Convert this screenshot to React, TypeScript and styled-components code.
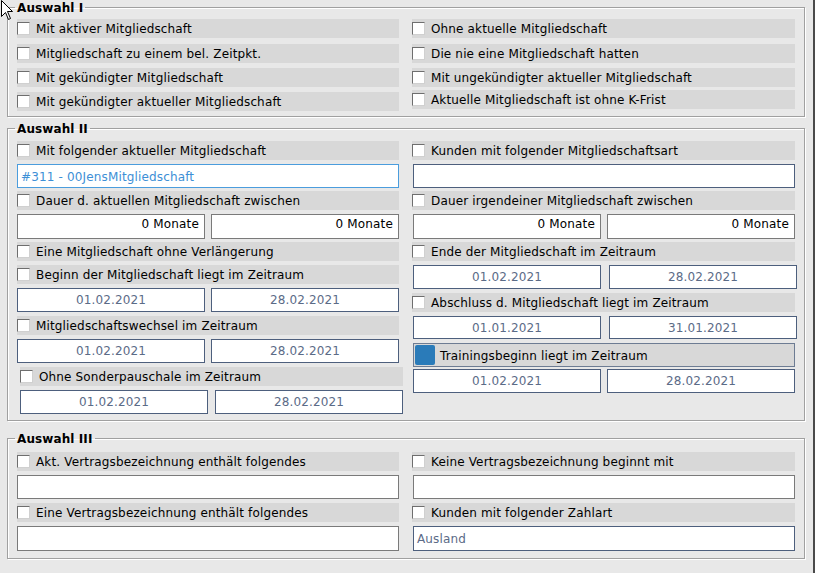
import React from 'react';
import styled, { createGlobalStyle } from 'styled-components';

const Global = createGlobalStyle`
  html, body { margin: 0; padding: 0; background: #e8e8e8; }
  body { font-family: "DejaVu Sans", Verdana, sans-serif; font-size: 12px; color: #000; letter-spacing: 0.15px; }
  * { box-sizing: border-box; }
`;

const Page = styled.div`
  position: relative;
  width: 815px;
  height: 573px;
  background: #e8e8e8;
  border-right: 2px solid #4a4a4a;
  overflow: hidden;
`;

const Group = styled.fieldset<{ $mt: number; $pt: number; $pb: number }>`
  margin: ${p => p.$mt}px 0 0 7px;
  width: 798px;
  min-width: 0;
  border: 1px solid #a0a0a0;
  box-shadow: 1px 1px 0 #fff, inset 1px 1px 0 #fff;
  padding: ${p => p.$pt}px 9px ${p => p.$pb}px 9px;
  display: grid;
  grid-template-columns: 382px 383px;
  column-gap: 13px;
  align-items: start;
`;

const Legend = styled.legend`
  font-weight: bold;
  font-size: 12px;
  line-height: 14px;
  padding: 1px 2px 0;
  margin-left: -2px;
  letter-spacing: 0.1px;
`;

const Column = styled.div`
  display: flex;
  flex-direction: column;
  min-width: 0;
`;

const CheckRow = styled.div<{ $mt?: number; $ml?: number; $mr?: number }>`
  height: 19px;
  margin: ${p => p.$mt ?? 0}px ${p => p.$mr ?? 0}px 0 ${p => p.$ml ?? 0}px;
  background: #d8d8d8;
  display: flex;
  align-items: center;
  gap: 6px;
  white-space: nowrap;
  line-height: 19px;
`;

const Label = styled.span`
  padding-top: 1px;
`;

const Box = styled.span`
  width: 13px;
  height: 13px;
  flex: none;
  background: #fff;
  border-top: 1px solid #6e6e6e;
  border-left: 1px solid #6e6e6e;
  border-right: 1px solid #d0d0d0;
  border-bottom: 1px solid #d0d0d0;
`;

const ActiveRow = styled.div<{ $mt?: number; $ml?: number }>`
  height: 24px;
  margin: ${p => p.$mt ?? 0}px 0 0 ${p => p.$ml ?? 0}px;
  background: #d8d8d8;
  border: 1px solid #6d7c93;
  display: flex;
  align-items: center;
  gap: 5px;
  padding-left: 1px;
  white-space: nowrap;
`;

const BlueBox = styled.span`
  width: 20px;
  height: 20px;
  flex: none;
  background: #2a7bb9;
  border-radius: 2px;
`;

const borderTones: Record<string, string> = {
  focus: '#4b9ddd',
  slate: '#4d5f7d',
  grey: '#7a7a7a',
};

const TextField = styled.div<{ $tone: string; $mt?: number; $ml?: number; $h?: number }>`
  height: ${p => p.$h ?? 24}px;
  margin: ${p => p.$mt ?? 0}px 0 0 ${p => p.$ml ?? 0}px;
  background: #fff;
  border: 1px solid ${p => borderTones[p.$tone]};
  display: flex;
  align-items: center;
  padding: 1px 0 0 3px;
  color: ${p => (p.$tone === 'focus' ? '#3d8fd6' : '#5b6b87')};
  white-space: nowrap;
`;

const Pair = styled.div<{ $mt?: number; $ml?: number; $mr?: number; $gap?: number; $h?: number }>`
  display: grid;
  grid-template-columns: 1fr 1fr;
  column-gap: ${p => p.$gap ?? 6}px;
  height: ${p => p.$h ?? 24}px;
  margin: ${p => p.$mt ?? 0}px ${p => p.$mr ?? 0}px 0 ${p => p.$ml ?? 0}px;
`;

const DateField = styled.div`
  background: #fff;
  border: 1px solid #4d5f7d;
  color: #5b6b87;
  display: flex;
  align-items: center;
  justify-content: center;
`;

const MonthField = styled.div`
  background: #fff;
  border: 1px solid #7a7a7a;
  color: #000;
  text-align: right;
  padding: 2px 5px 0 0;
  line-height: 15px;
`;

const Cursor = styled.svg`
  position: absolute;
  left: 0;
  top: 0;
`;

type RowProps = { label: string; mt?: number; ml?: number; mr?: number };
const Check = ({ label, mt, ml, mr }: RowProps) => (
  <CheckRow $mt={mt} $ml={ml} $mr={mr}>
    <Box />
    <Label>{label}</Label>
  </CheckRow>
);

type PairProps = { a: string; b: string; mt?: number; ml?: number; mr?: number; gap?: number; h?: number };
const Dates = ({ a, b, mt, ml, mr, gap, h }: PairProps) => (
  <Pair $mt={mt} $ml={ml} $mr={mr} $gap={gap} $h={h}>
    <DateField>{a}</DateField>
    <DateField>{b}</DateField>
  </Pair>
);

const Months = ({ mt, ml }: { mt?: number; ml?: number }) => (
  <Pair $mt={mt} $ml={ml} $h={25}>
    <MonthField>0 Monate</MonthField>
    <MonthField>0 Monate</MonthField>
  </Pair>
);

export default function App() {
  return (
    <Page>
      <Global />
      <Group $mt={0} $pt={4} $pb={5}>
        <Legend>Auswahl I</Legend>
        <Column>
          <Check label="Mit aktiver Mitgliedschaft" />
          <Check label="Mitgliedschaft zu einem bel. Zeitpkt." mt={6} />
          <Check label="Mit gekündigter Mitgliedschaft" mt={5} />
          <Check label="Mit gekündigter aktueller Mitgliedschaft" mt={5} />
        </Column>
        <Column>
          <Check label="Ohne aktuelle Mitgliedschaft" />
          <Check label="Die nie eine Mitgliedschaft hatten" mt={6} />
          <Check label="Mit ungekündigter aktueller Mitgliedschaft" mt={5} />
          <Check label="Aktuelle Mitgliedschaft ist ohne K-Frist" mt={3} />
        </Column>
      </Group>

      <Group $mt={4} $pt={5} $pb={6}>
        <Legend>Auswahl II</Legend>
        <Column>
          <Check label="Mit folgender aktueller Mitgliedschaft" />
          <TextField $tone="focus" $mt={4}>#311 - 00JensMitgliedschaft</TextField>
          <Check label="Dauer d. aktuellen Mitgliedschaft zwischen" mt={3} />
          <Months mt={4} />
          <Check label="Eine Mitgliedschaft ohne Verlängerung" mt={3} />
          <Check label="Beginn der Mitgliedschaft liegt im Zeitraum" mt={4} />
          <Dates a="01.02.2021" b="28.02.2021" mt={4} />
          <Check label="Mitgliedschaftswechsel im Zeitraum" mt={4} />
          <Dates a="01.02.2021" b="28.02.2021" mt={4} />
          <Check label="Ohne Sonderpauschale im Zeitraum" mt={4} ml={3} mr={-4} />
          <Dates a="01.02.2021" b="28.02.2021" mt={4} ml={3} mr={-4} gap={7} />
        </Column>
        <Column>
          <Check label="Kunden mit folgender Mitgliedschaftsart" />
          <TextField $tone="slate" $mt={4} $ml={1} />
          <Check label="Dauer irgendeiner Mitgliedschaft zwischen" mt={3} />
          <Months mt={4} ml={1} />
          <Check label="Ende der Mitgliedschaft im Zeitraum" mt={3} />
          <Dates a="01.02.2021" b="28.02.2021" mt={4} ml={1} mr={-2} gap={8} />
          <Check label="Abschluss d. Mitgliedschaft liegt im Zeitraum" mt={4} />
          <Dates a="01.01.2021" b="31.01.2021" mt={4} ml={1} mr={-2} gap={8} h={23} />
          <ActiveRow $mt={4} $ml={1}>
            <BlueBox />
            <Label>Trainingsbeginn liegt im Zeitraum</Label>
          </ActiveRow>
          <Dates a="01.02.2021" b="28.02.2021" mt={2} ml={1} h={24} />
        </Column>
      </Group>

      <Group $mt={10} $pt={6} $pb={7}>
        <Legend>Auswahl III</Legend>
        <Column>
          <Check label="Akt. Vertragsbezeichnung enthält folgendes" />
          <TextField $tone="grey" $mt={4} />
          <Check label="Eine Vertragsbezeichnung enthält folgendes" mt={4} />
          <TextField $tone="grey" $mt={4} $h={25} />
        </Column>
        <Column>
          <Check label="Keine Vertragsbezeichnung beginnt mit" />
          <TextField $tone="grey" $mt={4} $ml={1} />
          <Check label="Kunden mit folgender Zahlart" mt={4} />
          <TextField $tone="slate" $mt={4} $ml={1} $h={25}>Ausland</TextField>
        </Column>
      </Group>

      <Cursor width="14" height="21" viewBox="0 0 14 21">
        <path d="M1.5 0.5 L1.5 16.5 L5.5 12.5 L8.5 19.5 L10.5 18.5 L7.5 11.5 L12.5 11.5 Z" fill="#fff" stroke="#000" strokeWidth="1" />
      </Cursor>
    </Page>
  );
}
